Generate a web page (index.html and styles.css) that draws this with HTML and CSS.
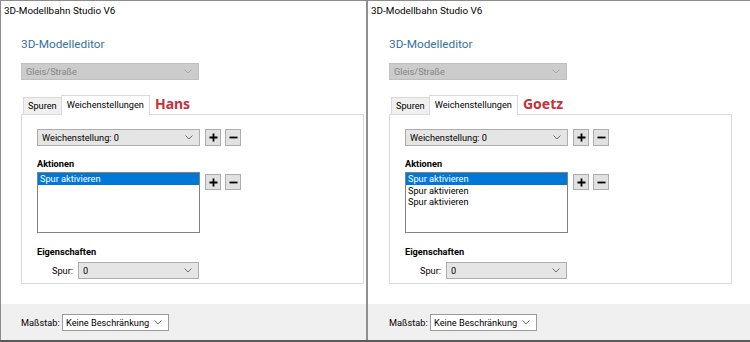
FILE: index.html
```html
<!DOCTYPE html>
<html lang="de">
<head>
<meta charset="utf-8">
<title>3D-Modellbahn Studio V6</title>
<link rel="stylesheet" href="styles.css">
</head>
<body>
<div class="screen">
  <section class="win win--left">
    <div class="titlebar">3D-Modellbahn Studio V6</div>
    <div class="body">
      <h1 class="heading">3D-Modelleditor</h1>
      <div class="combo combo--disabled combo--type"><span>Gleis/Straße</span><svg class="chev" viewBox="0 0 8 5"><path d="M0.5 0.5 L4 4 L7.5 0.5"/></svg></div>
      <div class="tabs">
        <div class="tab">Spuren</div>
        <div class="tab tab--active">Weichenstellungen</div>
        <div class="tag">Hans</div>
      </div>
      <div class="panel">
        <div class="row">
          <div class="combo combo--main"><span>Weichenstellung: 0</span><svg class="chev" viewBox="0 0 8 5"><path d="M0.5 0.5 L4 4 L7.5 0.5"/></svg></div>
          <div class="btn"><svg viewBox="0 0 9 9"><path d="M4.5 0.5 V8.5 M0.5 4.5 H8.5"/></svg></div>
          <div class="btn"><svg viewBox="0 0 9 9"><path d="M0.5 4.5 H8.5"/></svg></div>
        </div>
        <div class="label">Aktionen</div>
        <div class="row row--top">
          <div class="list">
            <div class="item item--sel">Spur aktivieren</div>
          </div>
          <div class="btn"><svg viewBox="0 0 9 9"><path d="M4.5 0.5 V8.5 M0.5 4.5 H8.5"/></svg></div>
          <div class="btn"><svg viewBox="0 0 9 9"><path d="M0.5 4.5 H8.5"/></svg></div>
        </div>
        <div class="label label--props">Eigenschaften</div>
        <div class="row row--prop">
          <span class="plabel">Spur:</span>
          <div class="combo combo--spur"><span>0</span><svg class="chev" viewBox="0 0 8 5"><path d="M0.5 0.5 L4 4 L7.5 0.5"/></svg></div>
        </div>
      </div>
    </div>
    <div class="footer">
      <span class="flabel">Maßstab:</span>
      <div class="combo combo--white"><span>Keine Beschränkung</span><svg class="chev" viewBox="0 0 8 5"><path d="M0.5 0.5 L4 4 L7.5 0.5"/></svg></div>
    </div>
  </section>
  <div class="divider"></div>
  <section class="win win--right">
    <div class="titlebar">3D-Modellbahn Studio V6</div>
    <div class="body">
      <h1 class="heading">3D-Modelleditor</h1>
      <div class="combo combo--disabled combo--type"><span>Gleis/Straße</span><svg class="chev" viewBox="0 0 8 5"><path d="M0.5 0.5 L4 4 L7.5 0.5"/></svg></div>
      <div class="tabs">
        <div class="tab">Spuren</div>
        <div class="tab tab--active">Weichenstellungen</div>
        <div class="tag">Goetz</div>
      </div>
      <div class="panel">
        <div class="row">
          <div class="combo combo--main"><span>Weichenstellung: 0</span><svg class="chev" viewBox="0 0 8 5"><path d="M0.5 0.5 L4 4 L7.5 0.5"/></svg></div>
          <div class="btn"><svg viewBox="0 0 9 9"><path d="M4.5 0.5 V8.5 M0.5 4.5 H8.5"/></svg></div>
          <div class="btn"><svg viewBox="0 0 9 9"><path d="M0.5 4.5 H8.5"/></svg></div>
        </div>
        <div class="label">Aktionen</div>
        <div class="row row--top">
          <div class="list">
            <div class="item item--sel">Spur aktivieren</div>
            <div class="item">Spur aktivieren</div>
            <div class="item">Spur aktivieren</div>
          </div>
          <div class="btn"><svg viewBox="0 0 9 9"><path d="M4.5 0.5 V8.5 M0.5 4.5 H8.5"/></svg></div>
          <div class="btn"><svg viewBox="0 0 9 9"><path d="M0.5 4.5 H8.5"/></svg></div>
        </div>
        <div class="label label--props">Eigenschaften</div>
        <div class="row row--prop">
          <span class="plabel">Spur:</span>
          <div class="combo combo--spur"><span>0</span><svg class="chev" viewBox="0 0 8 5"><path d="M0.5 0.5 L4 4 L7.5 0.5"/></svg></div>
        </div>
      </div>
    </div>
    <div class="footer">
      <span class="flabel">Maßstab:</span>
      <div class="combo combo--white"><span>Keine Beschränkung</span><svg class="chev" viewBox="0 0 8 5"><path d="M0.5 0.5 L4 4 L7.5 0.5"/></svg></div>
    </div>
  </section>
</div>
</body>
</html>
```

FILE: styles.css
```css
* { box-sizing: border-box; }
html, body { margin: 0; padding: 0; }
body {
  width: 750px;
  height: 342px;
  overflow: hidden;
  background: #fff;
  font-family: Roboto, "Noto Sans", sans-serif;
  font-size: 9.2px;
  color: #000;
}
.screen {
  display: flex;
  width: 750px;
  height: 342px;
  border-top: 1px solid #8c8c8c;
  border-bottom: 2px solid #5a5a5a;
}
.win {
  display: flex;
  flex-direction: column;
  height: 100%;
  background: #fff;
}
.win--left {
  width: 366px;
  border-left: 1px solid #8c8c8c;
}
.win--right {
  flex: 1;
}
.divider {
  width: 2px;
  background: #8f8f8f;
}
.titlebar {
  height: 22px;
  line-height: 20px;
  padding-left: 3px;
  font-size: 9.9px;
  white-space: nowrap;
}
.body {
  flex: 1;
  padding-left: 20px;
}
.win--right .body { padding-left: 21px; }
.heading {
  margin: 13px 0 0;
  height: 19px;
  line-height: 19px;
  font-size: 11.8px;
  font-weight: normal;
  color: #3571a3;
}
.combo {
  display: flex;
  align-items: center;
  justify-content: space-between;
  height: 17px;
  padding: 0 6px 0 4px;
  border: 1px solid #adadad;
  background: #e5e5e5;
  white-space: nowrap;
}
.combo span { line-height: 15px; overflow: hidden; }
.chev {
  flex: none;
  width: 8px;
  height: 5px;
  fill: none;
  stroke: #6e6e6e;
  stroke-width: 1;
}
.combo--type {
  width: 178px;
  margin-top: 9px;
}
.combo--disabled {
  background: #cccccc;
  border-color: #bfbfbf;
  color: #858585;
}
.combo--disabled .chev { stroke: #a6a6a6; }
.tabs {
  display: flex;
  align-items: flex-end;
  height: 20px;
  margin-top: 14px;
  padding-left: 2px;
}
.tab {
  height: 17px;
  line-height: 16px;
  padding: 0 4px;
  border: 1px solid #d9d9d9;
  border-bottom: none;
  background: #f0f0f0;
  white-space: nowrap;
}
.tab--active {
  height: 20px;
  line-height: 18px;
  padding: 0 5px;
  background: #fff;
  margin-left: -1px;
  margin-bottom: -1px;
  position: relative;
  z-index: 1;
}
.tag {
  align-self: center;
  margin-left: 5px;
  padding-bottom: 1px;
  font-family: "Noto Sans", sans-serif;
  font-size: 14px;
  font-weight: bold;
  color: #c8303a;
  line-height: 18px;
}
.panel {
  width: 343px;
  height: 170px;
  border: 1px solid #d9d9d9;
  padding: 14px 15px 0;
}
.row {
  display: flex;
  align-items: center;
  gap: 4px;
}
.row--top { align-items: flex-start; }
.combo--main { width: 163px; margin-right: 1px; }
.btn {
  width: 16px;
  height: 17px;
  display: flex;
  align-items: center;
  justify-content: center;
  border: 1px solid #adadad;
  background: #e1e1e1;
}
.row--top .btn { margin-top: 2px; height: 16px; }
.btn svg {
  width: 9px;
  height: 9px;
  fill: none;
  stroke: #000;
  stroke-width: 1.8;
}
.label {
  margin-top: 10px;
  height: 16px;
  line-height: 16px;
  font-weight: bold;
}
.list {
  width: 163px;
  height: 61px;
  margin-right: 1px;
  border: 1px solid #828282;
  background: #fff;
  padding: 0;
}
.item {
  height: 11px;
  line-height: 11px;
  padding-left: 2px;
  white-space: nowrap;
}
.item--sel {
  height: 12px;
  line-height: 12px;
  background: #0078d7;
  color: #fff;
}
.label--props { margin-top: 11px; }
.row--prop { margin-top: 2px; gap: 0; padding-left: 15px; }
.plabel { width: 26px; }
.combo--spur { width: 121px; }
.footer {
  height: 37px;
  display: flex;
  align-items: center;
  gap: 4px;
  padding-left: 20px;
  background: #f0f0f0;
  margin-top: 20px;
}
.win--right .footer { padding-left: 21px; }
.flabel { width: 37px; }
.combo--white {
  width: 107px;
  background: #fff;
  border-color: #9a9a9a;
  padding-left: 3px;
}
```
